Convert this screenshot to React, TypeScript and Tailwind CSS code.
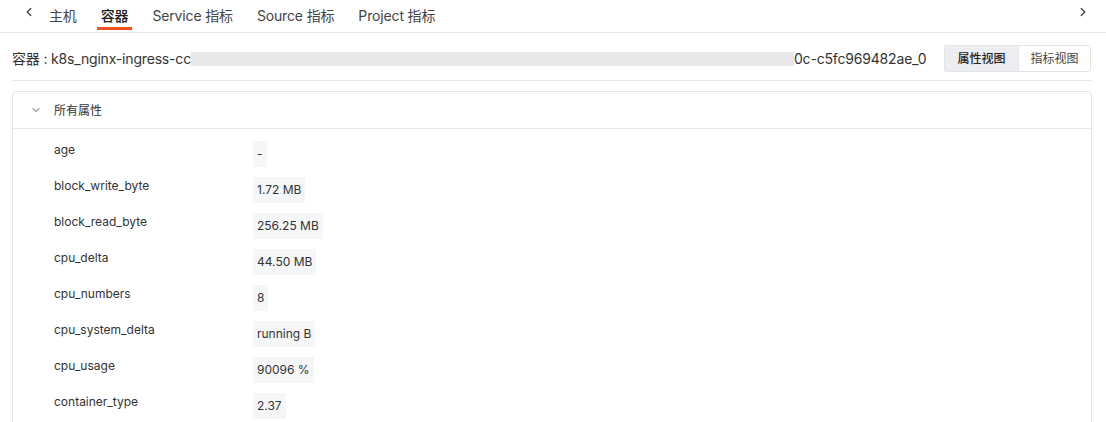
import { ChevronLeft, ChevronRight, ChevronDown } from 'lucide-react'

const tabs = ['主机', '容器', 'Service 指标', 'Source 指标', 'Project 指标']

const attrs: [string, string][] = [
  ['age', '-'],
  ['block_write_byte', '1.72 MB'],
  ['block_read_byte', '256.25 MB'],
  ['cpu_delta', '44.50 MB'],
  ['cpu_numbers', '8'],
  ['cpu_system_delta', 'running B'],
  ['cpu_usage', '90096 %'],
  ['container_type', '2.37'],
]

export default function App() {
  return (
    <div
      className="w-[1106px] h-[422px] overflow-hidden bg-white text-[#333]"
      style={{ fontFamily: 'Inter, "Noto Sans CJK SC", sans-serif' }}
    >
      {/* tabs */}
      <div className="flex items-center h-[33px] border-b border-[#e3e5ea] px-[22px]">
        <ChevronLeft className="w-[14px] h-[14px] text-[#444] -mt-[8px]" strokeWidth={2.2} />
        <div className="flex h-full ml-[13px] gap-[24px]">
          {tabs.map((t) => (
            <div key={t} className="relative flex items-center h-full text-[14px] tracking-[-0.15px] -mt-[1px]">
              <span className={t === '容器' ? 'text-[#222] font-medium' : 'text-[#444]'}>{t}</span>
              {t === '容器' && (
                <div className="absolute left-[-4px] right-[-4px] bottom-[1px] h-[3px] bg-[#f4511e]" />
              )}
            </div>
          ))}
        </div>
        <div className="flex-1" />
        <ChevronRight className="w-[14px] h-[14px] text-[#444] -mt-[8px] mr-[-6px]" strokeWidth={2.2} />
      </div>

      {/* container header */}
      <div className="ml-[12px] mr-[15px] mt-[12px] flex items-center h-[27px]">
        <div className="flex items-center text-[14px] tracking-[-0.18px] text-[#333]">
          <span>容器 : k8s_nginx-ingress-cc</span>
          <span className="inline-block w-[603px] h-[14px] bg-[#e7e7e7]" />
          <span>0c-c5fc969482ae_0</span>
        </div>
        <div className="flex-1" />
        <div className="flex border border-[#e2e4e8] rounded-[2px] text-[12px] h-[27px]">
          <button className="w-[73px] bg-[#eceef2] text-[#222] font-medium">属性视图</button>
          <button className="w-[72px] bg-white text-[#444] border-l border-[#e2e4e8]">指标视图</button>
        </div>
      </div>
      <div className="ml-[12px] mr-[14px] mt-[8px] border-b border-[#e3e5ea]" />

      {/* card */}
      <div className="ml-[12px] mr-[14px] mt-[10px] border border-[#e3e5ea] rounded-[3px]">
        <div className="flex items-center h-[37px] border-b border-[#e3e5ea]">
          <ChevronDown className="w-[12px] h-[12px] text-[#555] ml-[17px]" strokeWidth={2} />
          <span className="ml-[12px] text-[12px] text-[#333] mt-[1px]">所有属性</span>
        </div>
        <div className="flex flex-col gap-[10px] pt-[12px] pl-[41px] pb-[12px]">
          {attrs.map(([k, v]) => (
            <div key={k} className="flex items-start">
              <div className="w-[199px] text-[12px] leading-[18px] text-[#333]">{k}</div>
              <div className="bg-[#f5f6f8] px-[4px] py-[4px] text-[12px] leading-[18px] text-[#333]">{v}</div>
            </div>
          ))}
        </div>
      </div>
    </div>
  )
}
